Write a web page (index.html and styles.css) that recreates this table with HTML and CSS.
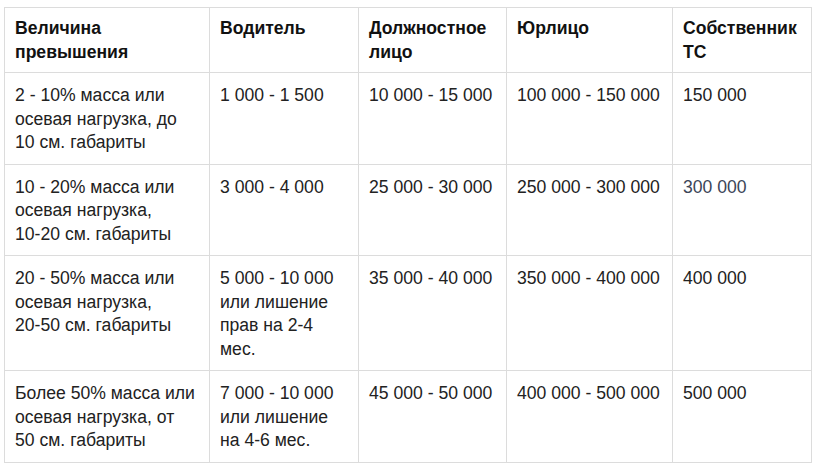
FILE: index.html
```html
<!DOCTYPE html>
<html lang="ru">
<head>
<meta charset="utf-8">
<title>Штрафы за перегруз</title>
<link rel="stylesheet" href="styles.css">
</head>
<body>
<div class="wrap">
<table class="fines">
<colgroup>
<col class="c1"><col class="c2"><col class="c3"><col class="c4"><col class="c5">
</colgroup>
<thead>
<tr>
<th>Величина превышения</th>
<th>Водитель</th>
<th>Должностное лицо</th>
<th>Юрлицо</th>
<th>Собственник ТС</th>
</tr>
</thead>
<tbody>
<tr>
<td>2 - 10% масса или осевая нагрузка, до <span class="nw">10 см.</span> габариты</td>
<td>1 000 - 1 500</td>
<td>10 000 - 15 000</td>
<td>100 000 - 150 000</td>
<td>150 000</td>
</tr>
<tr>
<td>10 - 20% масса или осевая нагрузка, <span class="nw">10-20 см.</span> габариты</td>
<td>3 000 - 4 000</td>
<td>25 000 - 30 000</td>
<td>250 000 - 300 000</td>
<td class="muted">300 000</td>
</tr>
<tr>
<td>20 - 50% масса или осевая нагрузка, <span class="nw">20-50 см.</span> габариты</td>
<td>5 000 - 10 000 или лишение прав на 2-4 мес.</td>
<td>35 000 - 40 000</td>
<td>350 000 - 400 000</td>
<td>400 000</td>
</tr>
<tr>
<td>Более 50% масса или осевая нагрузка, от <span class="nw">50 см.</span> габариты</td>
<td>7 000 - 10 000 или лишение на 4-6 мес.</td>
<td>45 000 - 50 000</td>
<td>400 000 - 500 000</td>
<td>500 000</td>
</tr>
</tbody>
</table>
</div>
</body>
</html>
```

FILE: styles.css
```css
html, body {
  margin: 0;
  padding: 0;
  background: #ffffff;
}
.wrap {
  padding: 7px 0 0 4px;
}
.fines {
  border-collapse: collapse;
  table-layout: fixed;
  width: 807px;
  font-family: "Liberation Sans", Arial, sans-serif;
  font-size: 17.6px;
  line-height: 23.5px;
  color: #222222;
}
.c1 { width: 205px; }
.c2 { width: 149px; }
.c3 { width: 148px; }
.c4 { width: 166px; }
.c5 { width: 139px; }
.fines th,
.fines td {
  border: 1px solid #dcdcdc;
  text-align: left;
  vertical-align: top;
  padding: 11px 10px 9px 10px;
}
.fines th {
  font-weight: bold;
  color: #111111;
  padding-top: 9px;
  padding-bottom: 8px;
}
.fines .muted {
  color: #3c4658;
}
.nw {
  white-space: nowrap;
}
```
